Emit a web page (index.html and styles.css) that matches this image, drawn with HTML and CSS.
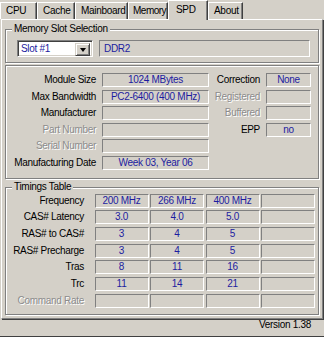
FILE: index.html
```html
<!DOCTYPE html>
<html lang="en">
<head>
    <meta charset="UTF-8">
    <title>CPU-Z - SPD</title>
    <link rel="stylesheet" href="styles.css">
</head>
<body>

<div class="window">
    <div class="tabs">
        <div class="tab tab-cpu">CPU</div>
        <div class="tab tab-cache">Cache</div>
        <div class="tab tab-board">Mainboard</div>
        <div class="tab tab-memory">Memory</div>
        <div class="tab tab-spd active">SPD</div>
        <div class="tab tab-about">About</div>
    </div>

    <div class="panel">
        <div class="group slot-group">
            <span class="legend">Memory Slot Selection</span>
            <div class="slot-row">
                <div class="select">
                    <span class="select-text">Slot #1</span>
                    <span class="drop"><span class="arrow"></span></span>
                </div>
                <div class="field type-field">DDR2</div>
            </div>
        </div>

        <div class="group module-group">
            <div class="label">Module Size</div>
            <div class="field">1024 MBytes</div>
            <div class="label">Correction</div>
            <div class="field">None</div>

            <div class="label">Max Bandwidth</div>
            <div class="field">PC2-6400 (400 MHz)</div>
            <div class="label off">Registered</div>
            <div class="field"></div>

            <div class="label">Manufacturer</div>
            <div class="field"></div>
            <div class="label off">Buffered</div>
            <div class="field"></div>

            <div class="label off">Part Number</div>
            <div class="field"></div>
            <div class="label">EPP</div>
            <div class="field">no</div>

            <div class="label off">Serial Number</div>
            <div class="field"></div>
            <div class="empty"></div>
            <div class="empty"></div>

            <div class="label">Manufacturing Date</div>
            <div class="field">Week 03, Year 06</div>
        </div>

        <div class="group timings-group">
            <span class="legend">Timings Table</span>
            <div class="label">Frequency</div>
            <div class="field">200 MHz</div>
            <div class="field">266 MHz</div>
            <div class="field">400 MHz</div>
            <div class="field"></div>

            <div class="label">CAS# Latency</div>
            <div class="field">3.0</div>
            <div class="field">4.0</div>
            <div class="field">5.0</div>
            <div class="field"></div>

            <div class="label">RAS# to CAS#</div>
            <div class="field">3</div>
            <div class="field">4</div>
            <div class="field">5</div>
            <div class="field"></div>

            <div class="label">RAS# Precharge</div>
            <div class="field">3</div>
            <div class="field">4</div>
            <div class="field">5</div>
            <div class="field"></div>

            <div class="label">Tras</div>
            <div class="field">8</div>
            <div class="field">11</div>
            <div class="field">16</div>
            <div class="field"></div>

            <div class="label">Trc</div>
            <div class="field">11</div>
            <div class="field">14</div>
            <div class="field">21</div>
            <div class="field"></div>

            <div class="label off">Command Rate</div>
            <div class="field"></div>
            <div class="field"></div>
            <div class="field"></div>
            <div class="field"></div>
        </div>
    </div>

    <div class="version">Version 1.38</div>
</div>

</body>
</html>
```

FILE: styles.css
```css
body {
    margin: 0;
    background-color: #d4d0c8;
    font-family: 'Liberation Sans', Arial, sans-serif;
    font-size: 10px;
    letter-spacing: -0.3px;
    color: #000;
}
.window {
    width: 324px;
    height: 337px;
    box-sizing: border-box;
    border-bottom: 1px solid #404040;
    overflow: hidden;
}

/* tab strip */
.tabs {
    display: flex;
    align-items: flex-end;
    height: 19px;
}
.tab {
    box-sizing: border-box;
    height: 17px;
    padding: 1px 0 0 5px;
    line-height: 13px;
    white-space: nowrap;
    border-top: 1px solid #fff;
    border-left: 1px solid #fff;
    border-right: 1px solid #404040;
    box-shadow: inset -1px 0 0 #808080;
}
.tab-cpu { width: 37px; }
.tab-cache { width: 38px; }
.tab-board { width: 53px; }
.tab-memory { width: 40px; padding-left: 4px; letter-spacing: -0.5px; }
.tab-spd { width: 40px; }
.tab-about { width: 35px; }
.tab.active {
    height: 20px;
    padding-top: 2px;
    padding-left: 7px;
    position: relative;
    z-index: 1;
    background-color: #d4d0c8;
    margin-bottom: -1px;
}

/* tab page */
.panel {
    width: 322px;
    box-sizing: border-box;
    margin-left: 1px;
    padding: 0 3px 3px 3px;
    border-top: 1px solid #fff;
    border-left: 1px solid #fff;
    border-right: 1px solid #808080;
    border-bottom: 1px solid #808080;
    box-shadow: 1px 1px 0 #404040;
}

/* group boxes */
.group {
    position: relative;
    border: 1px solid #808080;
    box-shadow: inset 1px 1px 0 #fff, 1px 1px 0 #fff;
    width: 314px;
    box-sizing: border-box;
}
.legend {
    position: absolute;
    top: -7px;
    left: 6px;
    padding: 0 2px;
    line-height: 12px;
    background-color: #d4d0c8;
}

.slot-group {
    margin-top: 9px;
    padding: 10px 8px 5px 11px;
}
.slot-row {
    display: flex;
    gap: 6px;
}
.select {
    display: flex;
    width: 76px;
    height: 17px;
    box-sizing: border-box;
    background: #fff;
    border-top: 1px solid #808080;
    border-left: 1px solid #808080;
    border-right: 1px solid #fff;
    border-bottom: 1px solid #fff;
    box-shadow: inset 1px 1px 0 #404040, inset -1px -1px 0 #d4d0c8;
    padding: 2px;
}
.select-text {
    flex: 1;
    color: #1c1ca0;
    line-height: 11px;
    padding-left: 1px;
}
.drop {
    width: 15px;
    height: 13px;
    box-sizing: border-box;
    background: #d4d0c8;
    border-top: 1px solid #d4d0c8;
    border-left: 1px solid #d4d0c8;
    border-right: 1px solid #404040;
    border-bottom: 1px solid #404040;
    box-shadow: inset 1px 1px 0 #fff, inset -1px -1px 0 #808080;
    display: flex;
    align-items: center;
    justify-content: center;
}
.arrow {
    width: 0;
    height: 0;
    border-left: 3.5px solid transparent;
    border-right: 3.5px solid transparent;
    border-top: 4px solid #000;
}

/* sunken value boxes */
.field {
    box-sizing: border-box;
    height: 14px;
    line-height: 12px;
    text-align: center;
    color: #1c1ca0;
    border-top: 1px solid #808080;
    border-left: 1px solid #808080;
    border-right: 1px solid #fff;
    border-bottom: 1px solid #fff;
    white-space: nowrap;
}
.type-field {
    flex: 1;
    height: 17px;
    line-height: 15px;
    text-align: left;
    padding-left: 4px;
}
.label {
    text-align: right;
    line-height: 14px;
    white-space: nowrap;
}
.label.off {
    color: #8c8c8c;
    text-shadow: 1px 1px 0 #fff;
}

.module-group {
    margin-top: 2px;
    padding: 7px 6px 8px 1px;
    display: grid;
    grid-template-columns: 90px 107px 47px 45px;
    grid-auto-rows: 14px;
    column-gap: 5px;
    row-gap: 2.5px;
}
.module-group .label {
    padding-right: 1px;
}

.timings-group {
    margin-top: 8px;
    padding: 6px 0 6px 1px;
    display: grid;
    grid-template-columns: 86px repeat(4, 54px);
    grid-auto-rows: 14px;
    column-gap: 1.5px;
    row-gap: 2.7px;
}
.timings-group .label {
    padding-right: 9px;
}

.version {
    text-align: right;
    padding-right: 13px;
    line-height: 12px;
}
```
